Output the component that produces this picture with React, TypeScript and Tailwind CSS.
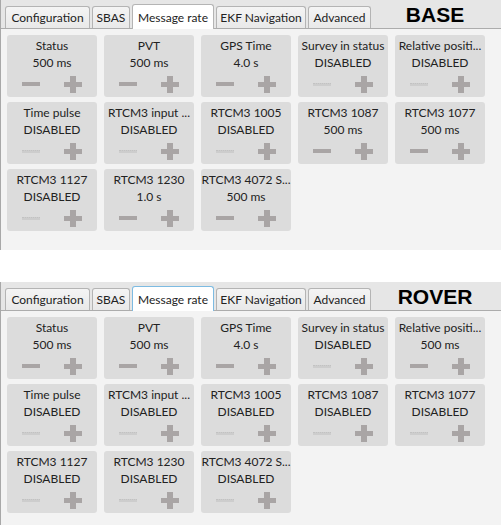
import React from 'react';

type Msg = { name: string; value: string };

const baseMsgs: Msg[] = [
  { name: 'Status', value: '500 ms' },
  { name: 'PVT', value: '500 ms' },
  { name: 'GPS Time', value: '4.0 s' },
  { name: 'Survey in status', value: 'DISABLED' },
  { name: 'Relative positi...', value: 'DISABLED' },
  { name: 'Time pulse', value: 'DISABLED' },
  { name: 'RTCM3 input ...', value: 'DISABLED' },
  { name: 'RTCM3 1005', value: 'DISABLED' },
  { name: 'RTCM3 1087', value: '500 ms' },
  { name: 'RTCM3 1077', value: '500 ms' },
  { name: 'RTCM3 1127', value: 'DISABLED' },
  { name: 'RTCM3 1230', value: '1.0 s' },
  { name: 'RTCM3 4072 S...', value: '500 ms' },
];

const roverMsgs: Msg[] = [
  { name: 'Status', value: '500 ms' },
  { name: 'PVT', value: '500 ms' },
  { name: 'GPS Time', value: '4.0 s' },
  { name: 'Survey in status', value: 'DISABLED' },
  { name: 'Relative positi...', value: '500 ms' },
  { name: 'Time pulse', value: 'DISABLED' },
  { name: 'RTCM3 input ...', value: 'DISABLED' },
  { name: 'RTCM3 1005', value: 'DISABLED' },
  { name: 'RTCM3 1087', value: 'DISABLED' },
  { name: 'RTCM3 1077', value: 'DISABLED' },
  { name: 'RTCM3 1127', value: 'DISABLED' },
  { name: 'RTCM3 1230', value: 'DISABLED' },
  { name: 'RTCM3 4072 S...', value: 'DISABLED' },
];

// tab widths measured off the screenshot
const tabs = [
  { label: 'Configuration', w: 'w-[85px]' },
  { label: 'SBAS', w: 'w-[38px]' },
  { label: 'Message rate', w: 'w-[82px]' },
  { label: 'EKF Navigation', w: 'w-[90px]' },
  { label: 'Advanced', w: 'w-[63px]' },
];

const MsgCard = ({ msg }: { msg: Msg }) => {
  const off = msg.value === 'DISABLED';
  return (
    <div className="h-[62px] rounded-[3px] bg-[#dcdcdc] flex flex-col items-center pt-[3px] text-[#222]">
      <div className="leading-[16px] whitespace-nowrap">{msg.name}</div>
      <div className="leading-[16px] mt-[1px]">{msg.value}</div>
      <div className="flex items-center gap-[24px] mt-[4px] h-[18px]">
        {off ? (
          <div className="w-[18px] h-[3px] bg-[#cdcdcd] border-t border-dotted border-[#c2c2c2]" />
        ) : (
          <div className="w-[18px] h-[4px] bg-[#a9a5a5]" />
        )}
        <div className="relative w-[18px] h-[17px]">
          <div className="absolute left-0 right-0 top-[6px] h-[5px] bg-[#a9a5a5]" />
          <div className="absolute top-0 bottom-0 left-[6px] w-[6px] bg-[#a9a5a5]" />
        </div>
      </div>
    </div>
  );
};

const Panel = ({ label, msgs, focused, grow }: { label: string; msgs: Msg[]; focused?: boolean; grow?: boolean }) => (
  <div className={`bg-[#f3f3f3] border-l border-[#a8a8a8] ${grow ? 'flex-1' : 'h-[250px]'}`}>
    <div className="h-[29px] bg-[#e6e6e6] border-b border-[#acacac] flex items-end pl-[4px] gap-[2px]">
      {tabs.map((t, i) =>
        i === 2 ? (
          <div
            key={t.label}
            className={`${t.w} h-[25px] -mb-px bg-white border border-b-0 rounded-t-[3px] flex items-center justify-center pt-[1px] whitespace-nowrap ${focused ? 'border-[#7dbbe2]' : 'border-[#b4b4b4]'}`}
          >
            {t.label}
          </div>
        ) : (
          <div
            key={t.label}
            className={`${t.w} h-[22px] bg-gradient-to-b from-[#f4f4f4] to-[#e9e9e9] border border-b-0 border-[#b4b4b4] rounded-t-[3px] flex items-center justify-center whitespace-nowrap`}
          >
            {t.label}
          </div>
        )
      )}
      <div className="flex-1 self-center text-center font-bold text-[21px] leading-none text-black font-['Liberation_Sans',Arial,sans-serif] pr-[4px]">
        {label}
      </div>
    </div>
    <div className="grid grid-cols-[repeat(5,90px)] gap-x-[7px] gap-y-[5px] px-[6px] pt-[6px]">
      {msgs.map((m) => (
        <MsgCard key={m.name} msg={m} />
      ))}
    </div>
  </div>
);

export default function App() {
  return (
    <div className="w-[501px] h-[525px] bg-white flex flex-col text-[12px] text-[#222] font-['Lato','Open_Sans',sans-serif] overflow-hidden">
      <Panel label="BASE" msgs={baseMsgs} />
      <div className="h-[32px] bg-white" />
      <Panel label="ROVER" msgs={roverMsgs} focused grow />
    </div>
  );
}
